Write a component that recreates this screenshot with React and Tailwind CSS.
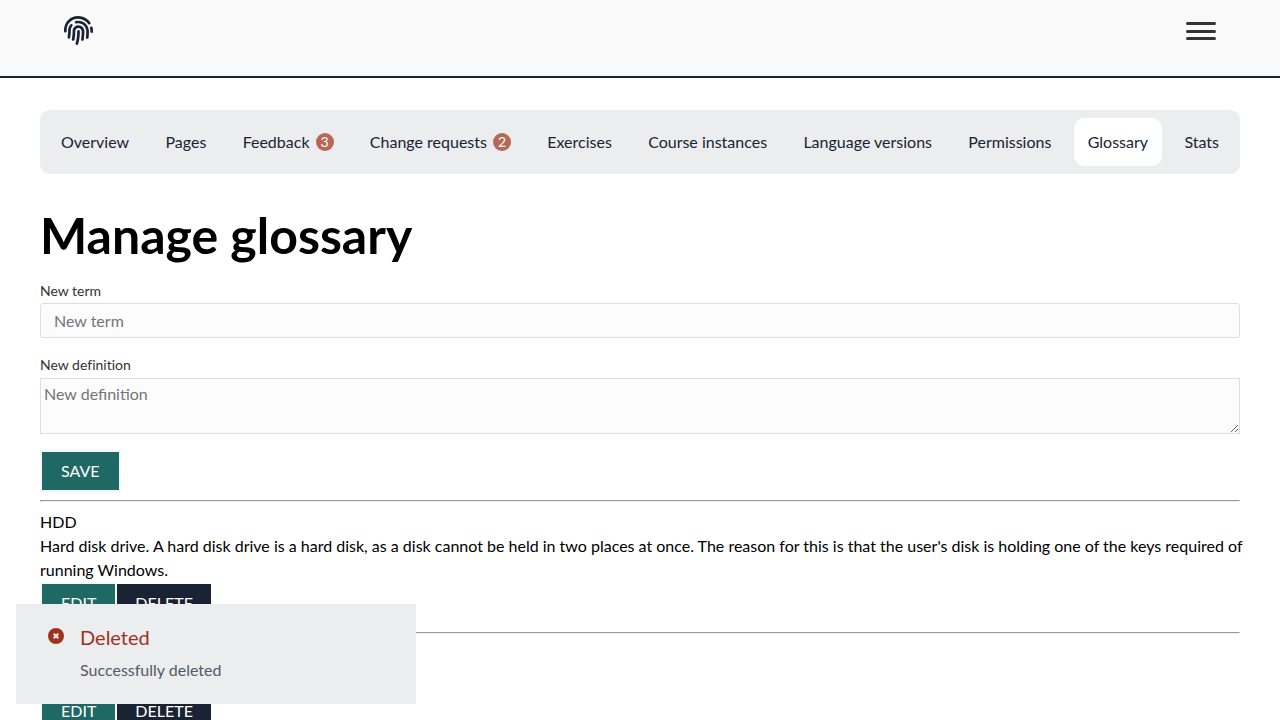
import React from "react";
import { FaFingerprint } from "react-icons/fa";

const tabs = [
  { label: "Overview" },
  { label: "Pages" },
  { label: "Feedback", count: 3 },
  { label: "Change requests", count: 2 },
  { label: "Exercises" },
  { label: "Course instances" },
  { label: "Language versions" },
  { label: "Permissions" },
  { label: "Glossary", active: true },
  { label: "Stats" },
];

const entries = [
  {
    id: 1,
    term: "HDD",
    definition:
      "Hard disk drive. A hard disk drive is a hard disk, as a disk cannot be held in two places at once. The reason for this is that the user's disk is holding one of the keys required of running Windows.",
  },
  { id: 2, term: "", definition: "" },
];

function Header() {
  return (
    <header className="flex h-[78px] items-start justify-between border-b-2 border-[#1a2333] bg-[#f9f9f9] px-16">
      <a href="#home" aria-label="Home" className="mt-4 text-[#1a2333]">
        <FaFingerprint size={29} />
      </a>
      <button
        type="button"
        aria-label="Open menu"
        className="mt-[22px] flex h-[18px] flex-col justify-between"
      >
        <span className="h-[3px] w-[30px] rounded-full bg-[#333]" />
        <span className="h-[3px] w-[30px] rounded-full bg-[#333]" />
        <span className="h-[3px] w-[30px] rounded-full bg-[#333]" />
      </button>
    </header>
  );
}

function Tabs() {
  return (
    <nav className="flex justify-between rounded-[10px] bg-[#ebedee] px-[7px] py-2">
      {tabs.map((tab) => (
        <a
          key={tab.label}
          href="#tab"
          aria-current={tab.active ? "page" : undefined}
          className={`flex h-12 items-center gap-[6px] rounded-[10px] px-[14px] whitespace-nowrap text-[#1a2333] ${
            tab.active ? "bg-white" : ""
          }`}
        >
          {tab.label}
          {tab.count && (
            <span className="flex size-[18px] items-center justify-center rounded-full bg-[#b86655] text-sm text-white">
              {tab.count}
            </span>
          )}
        </a>
      ))}
    </nav>
  );
}

function PrimaryButton({ children, type = "button" }) {
  return (
    <button
      type={type}
      className="h-[42px] border-2 border-[#f5f6f7] bg-[#1f6964] px-[19px] text-white uppercase"
    >
      {children}
    </button>
  );
}

function Divider() {
  return (
    <hr className="my-2 h-[2px] border border-t-[#9a9a9a] border-r-[#eeeeee] border-b-[#eeeeee] border-l-[#9a9a9a]" />
  );
}

function Entry({ term, definition }) {
  return (
    <section>
      <p className="min-h-6">{term}</p>
      <p className="-mr-2 min-h-6">{definition}</p>
      <div className="flex items-center">
        <PrimaryButton>Edit</PrimaryButton>
        <button type="button" className="h-[38px] bg-[#1a2333] px-[18px] text-white uppercase">
          Delete
        </button>
      </div>
      <Divider />
    </section>
  );
}

function Toast() {
  return (
    <div
      role="status"
      className="fixed bottom-4 left-4 flex h-[100px] w-[400px] gap-4 bg-[#ebedee] px-8 pt-5"
    >
      <svg viewBox="0 0 16 16" className="mt-1 size-4 shrink-0" aria-hidden="true">
        <circle cx="8" cy="8" r="8" fill="#9f321f" />
        <path d="M5.7 5.7l4.6 4.6M10.3 5.7l-4.6 4.6" stroke="#ebedee" strokeWidth="2" />
      </svg>
      <div>
        <p className="text-xl leading-[26px] text-[#9f321f]">Deleted</p>
        <p className="mt-2 text-[#535a66]">Successfully deleted</p>
      </div>
    </div>
  );
}

export default function App() {
  return (
    <div className="min-h-screen bg-white font-['Lato',sans-serif] text-base text-black">
      <Header />
      <main className="px-10 pt-8">
        <Tabs />
        <h1 className="mt-7 text-[50px] leading-[66px] font-bold">Manage glossary</h1>
        <form className="mt-[13px]">
          <label
            htmlFor="term"
            className="block text-sm leading-5 text-[#333] [font-variant-ligatures:none]"
          >
            New term
          </label>
          <input
            id="term"
            type="text"
            placeholder="New term"
            className="mt-[2px] block h-[35px] w-full rounded-[3px] border border-[#dedede] bg-[#fcfcfc] px-[13px] placeholder:text-[#757575]"
          />
          <label
            htmlFor="definition"
            className="mt-[17px] block text-sm leading-5 text-[#333] [font-variant-ligatures:none]"
          >
            New definition
          </label>
          <textarea
            id="definition"
            placeholder="New definition"
            className="mt-[3px] mb-4 block h-14 w-full resize border border-[#dedede] bg-[#fcfcfc] p-[3px] placeholder:text-[#757575]"
          />
          <PrimaryButton type="submit">Save</PrimaryButton>
        </form>
        <Divider />
        {entries.map((entry) => (
          <Entry key={entry.id} term={entry.term} definition={entry.definition} />
        ))}
      </main>
      <Toast />
    </div>
  );
}
